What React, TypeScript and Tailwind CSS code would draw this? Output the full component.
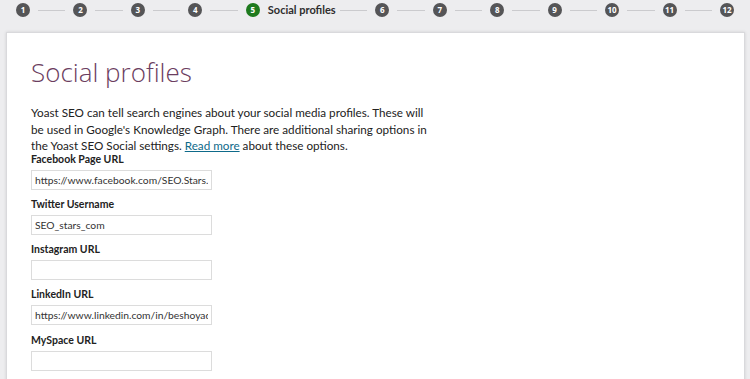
import React from "react";

const steps = [1, 2, 3, 4, 5, 6, 7, 8, 9, 10, 11, 12];

const fields = [
  { label: "Facebook Page URL", value: "https://www.facebook.com/SEO.Stars.com" },
  { label: "Twitter Username", value: "SEO_stars_com" },
  { label: "Instagram URL", value: "" },
  { label: "LinkedIn URL", value: "https://www.linkedin.com/in/beshoyadel" },
  { label: "MySpace URL", value: "" },
];

function Stepper() {
  return (
    <div className="flex items-center h-[18px] pl-[16px] pr-[16px]">
      {steps.map((n, i) => (
        <React.Fragment key={n}>
          {i > 0 && <div className="flex-1 h-px bg-[#cbcbce] mx-[8px]" />}
          <div className="flex items-center gap-[8px]">
            <span
              className={
                "w-[14px] h-[14px] rounded-full flex items-center justify-center text-[8px] font-bold text-white " +
                (n === 5 ? "bg-[#1e7a1e]" : "bg-[#555557]")
              }
            >
              {n}
            </span>
            {n === 5 && (
              <span
                className="w-[64px] whitespace-nowrap text-[11px] font-bold text-[#2e2e2e]"
                style={{ fontFamily: "Lato, sans-serif" }}
              >
                Social profiles
              </span>
            )}
          </div>
        </React.Fragment>
      ))}
    </div>
  );
}

export default function App() {
  return (
    <div
      className="w-[750px] h-[379px] overflow-hidden bg-[#ededef] pt-[1px]"
      style={{ fontFamily: '"Open Sans", "Noto Sans", sans-serif' }}
    >
      <Stepper />
      <div className="mt-[13px] ml-[6px] mr-[5px] h-[400px] bg-white border border-[#d9d9dc] shadow-[0_0_3px_rgba(0,0,0,0.12)] pl-[24px] pt-[23px]">
        <h1 className="text-[26px] font-light leading-[32px] text-[#6b3d60]">Social profiles</h1>
        <p
          className="mt-[16px] text-[11.7px] leading-[16.5px] text-[#222] whitespace-nowrap"
          style={{ fontFamily: "Lato, sans-serif" }}
        >
          Yoast SEO can tell search engines about your social media profiles. These will
          <br />
          be used in Google's Knowledge Graph. There are additional sharing options in
          <br />
          the Yoast SEO Social settings. <a className="text-[#0e6a8a] underline">Read more</a> about
          these options.
        </p>
        <div className="-mt-[1px] flex flex-col gap-[8.3px]" style={{ fontFamily: "Lato, sans-serif" }}>
          {fields.map((f) => (
            <div key={f.label} className="flex flex-col">
              <label className="text-[10.5px] font-bold text-[#222] leading-[12px]">{f.label}</label>
              <input
                readOnly
                value={f.value}
                className="mt-[5px] w-[181px] h-[20px] border border-[#dcdcdc] bg-white px-[3px] text-[10.3px] text-[#333] outline-none"
                style={{ fontFamily: "Lato, sans-serif" }}
              />
            </div>
          ))}
        </div>
      </div>
    </div>
  );
}
